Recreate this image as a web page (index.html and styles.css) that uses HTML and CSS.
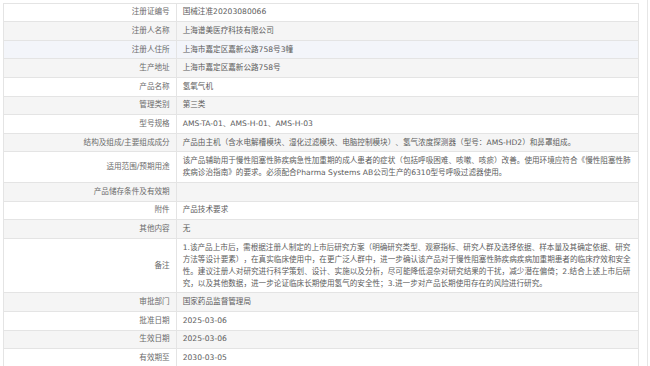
FILE: index.html
```html
<!doctype html>
<html lang="zh-CN">

<head>
    <meta charset="UTF-8">
    <meta name="viewport" content="width=device-width, initial-scale=1.0">
    <title>注册证详情</title>
    <link rel="stylesheet" href="styles.css">
</head>

<body>
    <div class="detail-panel">
        <table class="detail-table">
            <colgroup>
                <col class="col-label">
                <col>
            </colgroup>
            <tbody>
                <tr>
                    <th>注册证编号</th>
                    <td>国械注准20203080066</td>
                </tr>
                <tr class="row-alt">
                    <th>注册人名称</th>
                    <td>上海谱美医疗科技有限公司</td>
                </tr>
                <tr class="row-hover">
                    <th>注册人住所</th>
                    <td>上海市嘉定区嘉新公路758号3幢</td>
                </tr>
                <tr class="row-alt">
                    <th>生产地址</th>
                    <td>上海市嘉定区嘉新公路758号</td>
                </tr>
                <tr>
                    <th>产品名称</th>
                    <td>氢氧气机</td>
                </tr>
                <tr class="row-alt">
                    <th>管理类别</th>
                    <td>第三类</td>
                </tr>
                <tr>
                    <th>型号规格</th>
                    <td>AMS-TA-01、AMS-H-01、AMS-H-03</td>
                </tr>
                <tr class="row-alt">
                    <th>结构及组成/主要组成成分</th>
                    <td>产品由主机（含水电解槽模块、湿化过滤模块、电脑控制模块）、氢气浓度探测器（型号：AMS-HD2）和鼻罩组成。</td>
                </tr>
                <tr>
                    <th>适用范围/预期用途</th>
                    <td>该产品辅助用于慢性阻塞性肺疾病急性加重期的成人患者的症状（包括呼吸困难、咳嗽、咳痰）改善。使用环境应符合《慢性阻塞性肺疾病诊治指南》的要求。必须配合Pharma Systems AB公司生产的6310型号呼吸过滤器使用。</td>
                </tr>
                <tr class="row-alt">
                    <th>产品储存条件及有效期</th>
                    <td></td>
                </tr>
                <tr>
                    <th>附件</th>
                    <td>产品技术要求</td>
                </tr>
                <tr class="row-alt">
                    <th>其他内容</th>
                    <td>无</td>
                </tr>
                <tr>
                    <th>备注</th>
                    <td>1.该产品上市后，需根据注册人制定的上市后研究方案（明确研究类型、观察指标、研究人群及选择依据、样本量及其确定依据、研究方法等设计要素），在真实临床使用中，在更广泛人群中，进一步确认该产品对于慢性阻塞性肺疾病疾病加重期患者的临床疗效和安全性。建议注册人对研究进行科学策划、设计、实施以及分析，尽可能降低混杂对研究结果的干扰，减少潜在偏倚；2.结合上述上市后研<br>究，以及其他数据，进一步论证临床长期使用氢气的安全性；3.进一步对产品长期使用存在的风险进行研究。</td>
                </tr>
                <tr class="row-alt">
                    <th>审批部门</th>
                    <td>国家药品监督管理局</td>
                </tr>
                <tr>
                    <th>批准日期</th>
                    <td>2025-03-06</td>
                </tr>
                <tr class="row-alt">
                    <th>生效日期</th>
                    <td>2025-03-06</td>
                </tr>
                <tr>
                    <th>有效期至</th>
                    <td>2030-03-05</td>
                </tr>
            </tbody>
        </table>
    </div>
</body>

</html>
```

FILE: styles.css
```css
body {
    background-color: #fff;
    font-family: 'DejaVu Sans', 'Noto Sans CJK SC', sans-serif;
    color: #606266;
    margin: 0;
    padding: 0;
}

.detail-panel {
    width: 636px;
    padding: 2.7px 8px 0 2.7px;
    border-right: 1px solid #e6e6e6;
    min-height: 366px;
    box-sizing: content-box;
}

.detail-table {
    width: 636px;
    border-collapse: collapse;
    border: 1px solid #e2e2e2;
    font-size: 7.6px;
    line-height: 12px;
    text-spacing-trim: space-all;
}

.detail-table .col-label {
    width: 173px;
}

.detail-table th,
.detail-table td {
    border: 1px solid #e4e4e4;
    padding: 2.8px 6px;
    vertical-align: middle;
}

.detail-table th {
    font-weight: normal;
    text-align: right;
    color: #6b6b6b;
}

.detail-table td {
    text-align: left;
    color: #5c5c5c;
}

.row-alt {
    background-color: #f5f5f5;
}

.row-hover {
    background-color: #f3f5fa;
}
```
